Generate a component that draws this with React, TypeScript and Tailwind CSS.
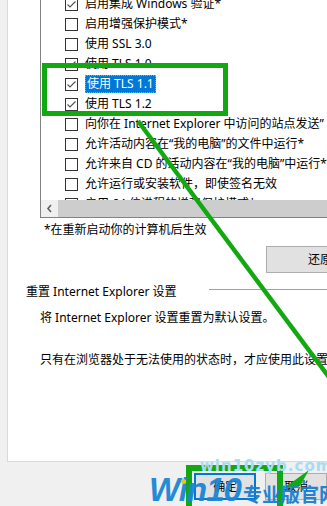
import React from "react";

const rows: { label: string; checked: boolean }[] = [
  { label: "启用集成 Windows 验证*", checked: true },
  { label: "启用增强保护模式*", checked: false },
  { label: "使用 SSL 3.0", checked: false },
  { label: "使用 TLS 1.0", checked: true },
  { label: "使用 TLS 1.1", checked: true },
  { label: "使用 TLS 1.2", checked: true },
  { label: "向你在 Internet Explorer 中访问的站点发送\u201D", checked: false },
  { label: "允许活动内容在\u201C我的电脑\u201D的文件中运行*", checked: false },
  { label: "允许来自 CD 的活动内容在\u201C我的电脑\u201D中运行*", checked: false },
  { label: "允许运行或安装软件，即使签名无效", checked: false },
  { label: "启用 64 位进程的增强保护模式*", checked: false },
];

function Box({ checked }: { checked: boolean }) {
  return (
    <div className="w-[13px] h-[13px] border border-[#333333] bg-white shrink-0 flex items-center justify-center">
      {checked && (
        <svg width="11" height="11" viewBox="0 0 11 11">
          <path d="M1.5 5.5 L4 8 L9.5 2.5" fill="none" stroke="#555" strokeWidth="1.2" />
        </svg>
      )}
    </div>
  );
}

export default function App() {
  return (
    <div className="relative w-[327px] h-[506px] overflow-hidden bg-[#f0f0f0] text-[12px] leading-[16px] text-black font-['Noto_Sans','Noto_Sans_CJK_SC',sans-serif]">
      {/* white panel */}
      <div className="ml-[7px] w-[340px] h-[462px] bg-white border-l border-b border-[#d9d9d9] flex flex-col">
        {/* listbox */}
        <div className="ml-[32px] w-[320px] h-[218px] border-l border-b border-[#828282] flex flex-col overflow-hidden">
          <div className="h-[201px] overflow-hidden">
            <div className="mt-[-6px] flex flex-col">
              {rows.map((r, i) => (
                <div key={i} className="h-[20px] flex items-center pl-[24px] gap-[7px] whitespace-nowrap">
                  <Box checked={r.checked} />
                  {i === 4 ? (
                    <span className="bg-[#0078d7] text-white px-[1px] h-[18px] flex items-center border border-dotted border-[#e0a030]">
                      {r.label}
                    </span>
                  ) : (
                    <span>{r.label}</span>
                  )}
                </div>
              ))}
            </div>
          </div>
          <div className="h-[17px] flex">
            <div className="w-[17px] h-full bg-[#f0f0f0] flex items-center justify-center">
              <svg width="7" height="9" viewBox="0 0 7 9">
                <path d="M5 1 L2 4.5 L5 8" fill="none" stroke="#606060" strokeWidth="1.6" />
              </svg>
            </div>
            <div className="flex-1 h-full bg-[#cdcdcd]" />
          </div>
        </div>
        <div className="ml-[36px] mt-[4px] h-[16px] whitespace-nowrap">*在重新启动你的计算机后生效</div>
        {/* restore button */}
        <div className="ml-[258px] mt-[8px] w-[80px] h-[27px] bg-[#e1e1e1] border border-[#adadad] flex items-center pl-[41px] whitespace-nowrap">
          还原(R)...
        </div>
        {/* section header */}
        <div className="mt-[11px] ml-[18px] flex items-center h-[16px] whitespace-nowrap">
          <span>重置 Internet Explorer 设置</span>
          <div className="flex-1 ml-[32px] h-px bg-[#a0a0a0] -mt-[5px]" />
        </div>
        <div className="mt-[10px] ml-[32px] h-[16px] whitespace-nowrap">将 Internet Explorer 设置重置为默认设置。</div>
        <div className="mt-[26px] ml-[32px] h-[16px] whitespace-nowrap">只有在浏览器处于无法使用的状态时，才应使用此设置。</div>
      </div>

      {/* bottom buttons */}
      <div className="flex mt-[11px] ml-[194px] gap-[9px]">
        <div className="w-[85px] h-[27px] bg-[#e1e1e1] border-2 border-[#0078d7] flex items-center justify-center">确定</div>
        <div className="w-[85px] h-[27px] bg-[#e1e1e1] border border-[#adadad] flex items-center justify-center">取消</div>
      </div>

      {/* green annotations */}
      <div className="absolute left-[42px] top-[63px] w-[186px] h-[53px] border-[5px] border-[#12a812]" />
      <div className="absolute left-[186px] top-[465px] w-[97px] h-[46px] border-[6px] border-[#12a812] border-b-0" />
      <svg className="absolute left-0 top-0" width="327" height="506" viewBox="0 0 327 506">
        <line x1="138" y1="121" x2="340" y2="392" stroke="#12a812" strokeWidth="4.5" />
        <polygon points="284,488 309,470 300,486" fill="#12a812" />
      </svg>

      {/* watermark */}
      <div className="absolute left-[200px] top-[457px] text-[15px] leading-[18px] font-bold tracking-[1px] text-[#a8dcf2] font-['DejaVu_Sans',sans-serif] whitespace-nowrap">
        win10zyb.com
      </div>
      <div className="absolute left-[149px] top-[473px] flex items-end whitespace-nowrap opacity-95">
        <span className="text-[33px] leading-[34px] font-bold italic text-[#1a86d6] font-['Liberation_Sans',sans-serif] tracking-[-1px]">
          Win10
        </span>
        <span className="text-[19px] leading-[26px] font-bold text-[#1a7fd0] ml-[2px] font-['Noto_Sans_CJK_SC',sans-serif]">
          专业版官网
        </span>
      </div>
      <div className="absolute left-[181px] top-[479px] w-[5px] h-[5px] rounded-full bg-[#f5c400]" />
    </div>
  );
}
